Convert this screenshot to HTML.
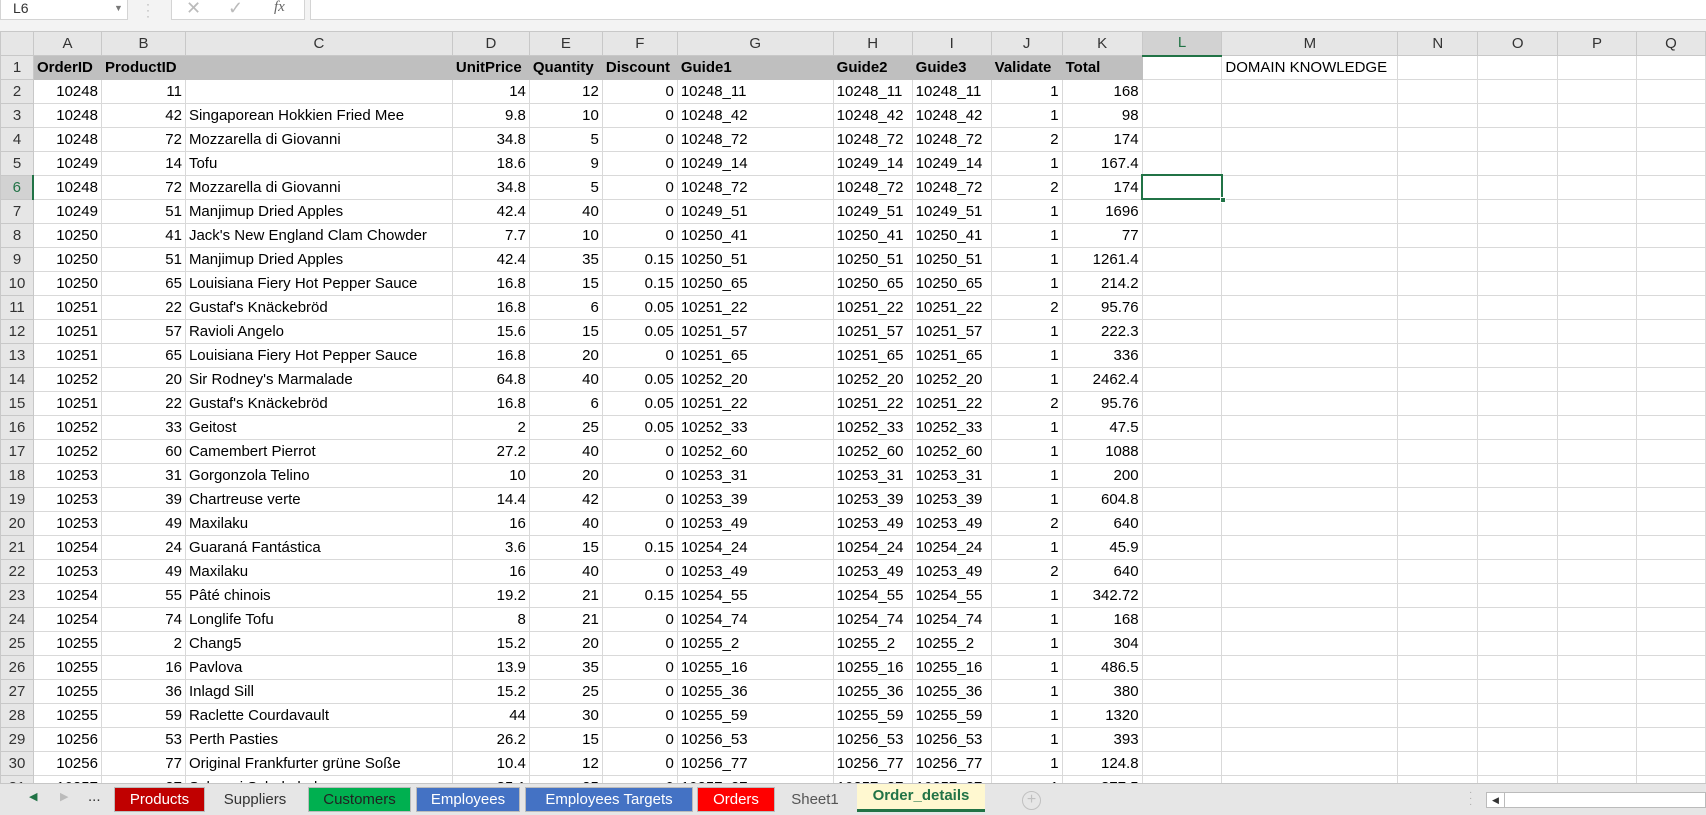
<!DOCTYPE html>
<html><head><meta charset="utf-8"><style>
*{margin:0;padding:0;box-sizing:border-box}
body{width:1706px;height:815px;overflow:hidden;background:#fff;font-family:"Liberation Sans",sans-serif;position:relative}
#fb{position:absolute;left:0;top:0;width:1706px;height:31px;background:#f3f3f3}
.nb{position:absolute;left:0;top:0;width:128px;height:20px;background:#fff;border:1px solid #d4d4d4;border-top:none;font-size:14px;padding:0 0 0 12px;line-height:16px;color:#333}
.fx{position:absolute;left:171px;top:0;width:134px;height:20px;background:#fff;border:1px solid #d4d4d4;border-top:none}
.fin{position:absolute;left:310px;top:0;width:1396px;height:20px;background:#fff;border:1px solid #d4d4d4;border-top:none;border-right:none}
table{position:absolute;left:0;top:31px;border-collapse:collapse;table-layout:fixed;font-size:15px}
td{height:24px;border:1px solid #d9d9d9;padding:0 3px;white-space:nowrap;overflow:hidden;color:#000;line-height:22px}
tr.h td{background:#e6e6e6;text-align:center;color:#333;border-color:#c8c8c8;height:24px}
td.r{background:#e6e6e6;text-align:center;color:#333;border-color:#c8c8c8}
td.n{text-align:right}
tr.b td{background:#bfbfbf;font-weight:bold;border-color:#bfbfbf}
tr.b td.r{background:#e6e6e6;font-weight:normal;border-color:#c8c8c8}
#sel{position:absolute;left:1141px;top:174px;width:82px;height:26px;border:2px solid #217346}
#tabs{position:absolute;left:0;top:783px;width:1706px;height:32px;background:#e6e6e6;border-top:1px solid #c6c6c6;font-size:15px}
.t{position:absolute;top:3px;height:25px;line-height:23px;text-align:center;color:#fff;border:1px solid #bbb}
</style></head><body>
<div id="fb">
<div class="nb">L6<span style="position:absolute;left:113px;top:0;font-size:9px;color:#777">▼</span></div>
<span style="position:absolute;left:146px;top:1px;color:#aaa;font-size:12px;line-height:6px">·<br>·<br>·</span>
<div class="fx"><span style="position:absolute;left:14px;top:-2px;color:#bbb;font-size:18px">✕</span><span style="position:absolute;left:56px;top:-2px;color:#bbb;font-size:18px">✓</span><span style="position:absolute;left:102px;top:-1px;color:#666;font-size:15px;font-style:italic;font-family:'Liberation Serif',serif">fx</span></div>
<div class="fin"></div>
</div>
<table>
<colgroup><col style="width:33px"><col style="width:68px"><col style="width:84px"><col style="width:267px"><col style="width:77px"><col style="width:73px"><col style="width:75px"><col style="width:156px"><col style="width:79px"><col style="width:79px"><col style="width:71px"><col style="width:80px"><col style="width:80px"><col style="width:176px"><col style="width:80px"><col style="width:80px"><col style="width:79px"><col style="width:69px"></colgroup>
<tr class="h"><td style="background:#e6e6e6"></td><td>A</td><td>B</td><td>C</td><td>D</td><td>E</td><td>F</td><td>G</td><td>H</td><td>I</td><td>J</td><td>K</td><td style="background:#d2d2d2;color:#217346;border-bottom:2px solid #217346">L</td><td>M</td><td>N</td><td>O</td><td>P</td><td>Q</td></tr>
<tr class="b"><td class="r">1</td><td>OrderID</td><td>ProductID</td><td></td><td>UnitPrice</td><td>Quantity</td><td>Discount</td><td>Guide1</td><td>Guide2</td><td>Guide3</td><td>Validate</td><td>Total</td><td style="background:#fff;border-color:#d9d9d9"></td><td style="background:#fff;border-color:#d9d9d9;font-weight:normal">DOMAIN KNOWLEDGE</td><td style="background:#fff;border-color:#d9d9d9"></td><td style="background:#fff;border-color:#d9d9d9"></td><td style="background:#fff;border-color:#d9d9d9"></td><td style="background:#fff;border-color:#d9d9d9"></td></tr>
<tr><td class="r">2</td><td class="n">10248</td><td class="n">11</td><td></td><td class="n">14</td><td class="n">12</td><td class="n">0</td><td>10248_11</td><td>10248_11</td><td>10248_11</td><td class="n">1</td><td class="n">168</td><td></td><td></td><td></td><td></td><td></td><td></td></tr>
<tr><td class="r">3</td><td class="n">10248</td><td class="n">42</td><td>Singaporean Hokkien Fried Mee</td><td class="n">9.8</td><td class="n">10</td><td class="n">0</td><td>10248_42</td><td>10248_42</td><td>10248_42</td><td class="n">1</td><td class="n">98</td><td></td><td></td><td></td><td></td><td></td><td></td></tr>
<tr><td class="r">4</td><td class="n">10248</td><td class="n">72</td><td>Mozzarella di Giovanni</td><td class="n">34.8</td><td class="n">5</td><td class="n">0</td><td>10248_72</td><td>10248_72</td><td>10248_72</td><td class="n">2</td><td class="n">174</td><td></td><td></td><td></td><td></td><td></td><td></td></tr>
<tr><td class="r">5</td><td class="n">10249</td><td class="n">14</td><td>Tofu</td><td class="n">18.6</td><td class="n">9</td><td class="n">0</td><td>10249_14</td><td>10249_14</td><td>10249_14</td><td class="n">1</td><td class="n">167.4</td><td></td><td></td><td></td><td></td><td></td><td></td></tr>
<tr><td class="r" style="background:#d2d2d2;color:#217346;border-right:2px solid #217346">6</td><td class="n">10248</td><td class="n">72</td><td>Mozzarella di Giovanni</td><td class="n">34.8</td><td class="n">5</td><td class="n">0</td><td>10248_72</td><td>10248_72</td><td>10248_72</td><td class="n">2</td><td class="n">174</td><td></td><td></td><td></td><td></td><td></td><td></td></tr>
<tr><td class="r">7</td><td class="n">10249</td><td class="n">51</td><td>Manjimup Dried Apples</td><td class="n">42.4</td><td class="n">40</td><td class="n">0</td><td>10249_51</td><td>10249_51</td><td>10249_51</td><td class="n">1</td><td class="n">1696</td><td></td><td></td><td></td><td></td><td></td><td></td></tr>
<tr><td class="r">8</td><td class="n">10250</td><td class="n">41</td><td>Jack's New England Clam Chowder</td><td class="n">7.7</td><td class="n">10</td><td class="n">0</td><td>10250_41</td><td>10250_41</td><td>10250_41</td><td class="n">1</td><td class="n">77</td><td></td><td></td><td></td><td></td><td></td><td></td></tr>
<tr><td class="r">9</td><td class="n">10250</td><td class="n">51</td><td>Manjimup Dried Apples</td><td class="n">42.4</td><td class="n">35</td><td class="n">0.15</td><td>10250_51</td><td>10250_51</td><td>10250_51</td><td class="n">1</td><td class="n">1261.4</td><td></td><td></td><td></td><td></td><td></td><td></td></tr>
<tr><td class="r">10</td><td class="n">10250</td><td class="n">65</td><td>Louisiana Fiery Hot Pepper Sauce</td><td class="n">16.8</td><td class="n">15</td><td class="n">0.15</td><td>10250_65</td><td>10250_65</td><td>10250_65</td><td class="n">1</td><td class="n">214.2</td><td></td><td></td><td></td><td></td><td></td><td></td></tr>
<tr><td class="r">11</td><td class="n">10251</td><td class="n">22</td><td>Gustaf's Knäckebröd</td><td class="n">16.8</td><td class="n">6</td><td class="n">0.05</td><td>10251_22</td><td>10251_22</td><td>10251_22</td><td class="n">2</td><td class="n">95.76</td><td></td><td></td><td></td><td></td><td></td><td></td></tr>
<tr><td class="r">12</td><td class="n">10251</td><td class="n">57</td><td>Ravioli Angelo</td><td class="n">15.6</td><td class="n">15</td><td class="n">0.05</td><td>10251_57</td><td>10251_57</td><td>10251_57</td><td class="n">1</td><td class="n">222.3</td><td></td><td></td><td></td><td></td><td></td><td></td></tr>
<tr><td class="r">13</td><td class="n">10251</td><td class="n">65</td><td>Louisiana Fiery Hot Pepper Sauce</td><td class="n">16.8</td><td class="n">20</td><td class="n">0</td><td>10251_65</td><td>10251_65</td><td>10251_65</td><td class="n">1</td><td class="n">336</td><td></td><td></td><td></td><td></td><td></td><td></td></tr>
<tr><td class="r">14</td><td class="n">10252</td><td class="n">20</td><td>Sir Rodney's Marmalade</td><td class="n">64.8</td><td class="n">40</td><td class="n">0.05</td><td>10252_20</td><td>10252_20</td><td>10252_20</td><td class="n">1</td><td class="n">2462.4</td><td></td><td></td><td></td><td></td><td></td><td></td></tr>
<tr><td class="r">15</td><td class="n">10251</td><td class="n">22</td><td>Gustaf's Knäckebröd</td><td class="n">16.8</td><td class="n">6</td><td class="n">0.05</td><td>10251_22</td><td>10251_22</td><td>10251_22</td><td class="n">2</td><td class="n">95.76</td><td></td><td></td><td></td><td></td><td></td><td></td></tr>
<tr><td class="r">16</td><td class="n">10252</td><td class="n">33</td><td>Geitost</td><td class="n">2</td><td class="n">25</td><td class="n">0.05</td><td>10252_33</td><td>10252_33</td><td>10252_33</td><td class="n">1</td><td class="n">47.5</td><td></td><td></td><td></td><td></td><td></td><td></td></tr>
<tr><td class="r">17</td><td class="n">10252</td><td class="n">60</td><td>Camembert Pierrot</td><td class="n">27.2</td><td class="n">40</td><td class="n">0</td><td>10252_60</td><td>10252_60</td><td>10252_60</td><td class="n">1</td><td class="n">1088</td><td></td><td></td><td></td><td></td><td></td><td></td></tr>
<tr><td class="r">18</td><td class="n">10253</td><td class="n">31</td><td>Gorgonzola Telino</td><td class="n">10</td><td class="n">20</td><td class="n">0</td><td>10253_31</td><td>10253_31</td><td>10253_31</td><td class="n">1</td><td class="n">200</td><td></td><td></td><td></td><td></td><td></td><td></td></tr>
<tr><td class="r">19</td><td class="n">10253</td><td class="n">39</td><td>Chartreuse verte</td><td class="n">14.4</td><td class="n">42</td><td class="n">0</td><td>10253_39</td><td>10253_39</td><td>10253_39</td><td class="n">1</td><td class="n">604.8</td><td></td><td></td><td></td><td></td><td></td><td></td></tr>
<tr><td class="r">20</td><td class="n">10253</td><td class="n">49</td><td>Maxilaku</td><td class="n">16</td><td class="n">40</td><td class="n">0</td><td>10253_49</td><td>10253_49</td><td>10253_49</td><td class="n">2</td><td class="n">640</td><td></td><td></td><td></td><td></td><td></td><td></td></tr>
<tr><td class="r">21</td><td class="n">10254</td><td class="n">24</td><td>Guaraná Fantástica</td><td class="n">3.6</td><td class="n">15</td><td class="n">0.15</td><td>10254_24</td><td>10254_24</td><td>10254_24</td><td class="n">1</td><td class="n">45.9</td><td></td><td></td><td></td><td></td><td></td><td></td></tr>
<tr><td class="r">22</td><td class="n">10253</td><td class="n">49</td><td>Maxilaku</td><td class="n">16</td><td class="n">40</td><td class="n">0</td><td>10253_49</td><td>10253_49</td><td>10253_49</td><td class="n">2</td><td class="n">640</td><td></td><td></td><td></td><td></td><td></td><td></td></tr>
<tr><td class="r">23</td><td class="n">10254</td><td class="n">55</td><td>Pâté chinois</td><td class="n">19.2</td><td class="n">21</td><td class="n">0.15</td><td>10254_55</td><td>10254_55</td><td>10254_55</td><td class="n">1</td><td class="n">342.72</td><td></td><td></td><td></td><td></td><td></td><td></td></tr>
<tr><td class="r">24</td><td class="n">10254</td><td class="n">74</td><td>Longlife Tofu</td><td class="n">8</td><td class="n">21</td><td class="n">0</td><td>10254_74</td><td>10254_74</td><td>10254_74</td><td class="n">1</td><td class="n">168</td><td></td><td></td><td></td><td></td><td></td><td></td></tr>
<tr><td class="r">25</td><td class="n">10255</td><td class="n">2</td><td>Chang5</td><td class="n">15.2</td><td class="n">20</td><td class="n">0</td><td>10255_2</td><td>10255_2</td><td>10255_2</td><td class="n">1</td><td class="n">304</td><td></td><td></td><td></td><td></td><td></td><td></td></tr>
<tr><td class="r">26</td><td class="n">10255</td><td class="n">16</td><td>Pavlova</td><td class="n">13.9</td><td class="n">35</td><td class="n">0</td><td>10255_16</td><td>10255_16</td><td>10255_16</td><td class="n">1</td><td class="n">486.5</td><td></td><td></td><td></td><td></td><td></td><td></td></tr>
<tr><td class="r">27</td><td class="n">10255</td><td class="n">36</td><td>Inlagd Sill</td><td class="n">15.2</td><td class="n">25</td><td class="n">0</td><td>10255_36</td><td>10255_36</td><td>10255_36</td><td class="n">1</td><td class="n">380</td><td></td><td></td><td></td><td></td><td></td><td></td></tr>
<tr><td class="r">28</td><td class="n">10255</td><td class="n">59</td><td>Raclette Courdavault</td><td class="n">44</td><td class="n">30</td><td class="n">0</td><td>10255_59</td><td>10255_59</td><td>10255_59</td><td class="n">1</td><td class="n">1320</td><td></td><td></td><td></td><td></td><td></td><td></td></tr>
<tr><td class="r">29</td><td class="n">10256</td><td class="n">53</td><td>Perth Pasties</td><td class="n">26.2</td><td class="n">15</td><td class="n">0</td><td>10256_53</td><td>10256_53</td><td>10256_53</td><td class="n">1</td><td class="n">393</td><td></td><td></td><td></td><td></td><td></td><td></td></tr>
<tr><td class="r">30</td><td class="n">10256</td><td class="n">77</td><td>Original Frankfurter grüne Soße</td><td class="n">10.4</td><td class="n">12</td><td class="n">0</td><td>10256_77</td><td>10256_77</td><td>10256_77</td><td class="n">1</td><td class="n">124.8</td><td></td><td></td><td></td><td></td><td></td><td></td></tr>
<tr><td class="r">31</td><td class="n">10257</td><td class="n">27</td><td>Schoggi Schokolade</td><td class="n">35.1</td><td class="n">25</td><td class="n">0</td><td>10257_27</td><td>10257_27</td><td>10257_27</td><td class="n">1</td><td class="n">877.5</td><td></td><td></td><td></td><td></td><td></td><td></td></tr>
</table>
<div id="sel"><div style="position:absolute;right:-5px;bottom:-5px;width:6px;height:6px;background:#217346;border:1px solid #fff"></div></div>
<div id="tabs">
<span style="position:absolute;left:29px;top:6px;color:#217346;font-size:11px">◀</span>
<span style="position:absolute;left:60px;top:6px;color:#bbb;font-size:11px">▶</span>
<span style="position:absolute;left:88px;top:4px;color:#333">...</span>
<div class="t" style="left:114px;width:91px;background:#c00000">Products</div>
<div class="t" style="left:205px;width:100px;background:#e6e6e6;color:#333;border-color:#e6e6e6">Suppliers</div>
<div class="t" style="left:308px;width:103px;background:#00b050;color:#222">Customers</div>
<div class="t" style="left:416px;width:104px;background:#4472c4">Employees</div>
<div class="t" style="left:525px;width:168px;background:#4472c4">Employees Targets</div>
<div class="t" style="left:697px;width:78px;background:#ff0000">Orders</div>
<div class="t" style="left:775px;width:80px;background:#e6e6e6;color:#555;border-color:#e6e6e6">Sheet1</div>
<div class="t" style="left:857px;width:128px;top:0;height:28px;background:#fff8d0;color:#217346;font-weight:bold;border:none;border-bottom:3px solid #217346">Order_details</div>
<div style="position:absolute;left:1022px;top:7px;width:19px;height:19px;border:1px solid #c0c0c0;border-radius:50%;color:#c0c0c0;text-align:center;line-height:16px;font-size:16px">+</div>
<span style="position:absolute;left:1469px;top:6px;color:#aaa;font-size:10px;line-height:6px">·<br>·<br>·</span>
<div style="position:absolute;left:1486px;top:8px;width:220px;height:16px;background:#fff;border:1px solid #bbb"><div style="position:absolute;left:0;top:0;width:18px;height:14px;border-right:1px solid #bbb;font-size:9px;line-height:14px;text-align:center;color:#333">◀</div></div>
</div>
</body></html>
